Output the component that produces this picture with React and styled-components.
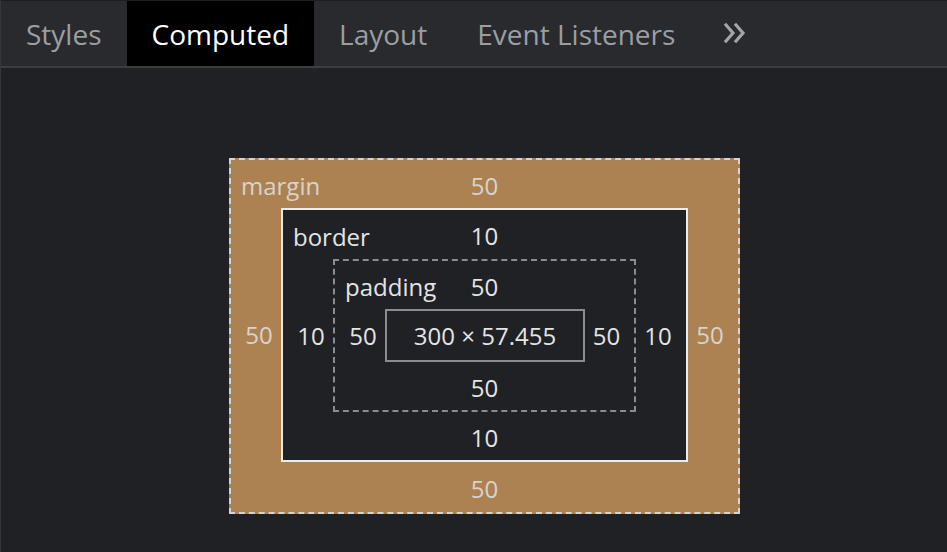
import React from "react";
import styled, { createGlobalStyle } from "styled-components";

const Global = createGlobalStyle`
  html, body { margin: 0; padding: 0; background: #202124; }
  body { font-family: "Open Sans", "Liberation Sans", sans-serif; }
  * { box-sizing: border-box; }
`;

const Root = styled.div`
  width: 947px;
  height: 552px;
  background: #202124;
  overflow: hidden;
  border-left: 1px solid #34353a;
`;

const TabBar = styled.div`
  display: flex;
  align-items: stretch;
  height: 68px;
  background: #292a2e;
  border-top: 1px solid #1c1d20;
  border-bottom: 2px solid #3c3d41;
`;

const Tab = styled.div`
  display: flex;
  align-items: center;
  padding: 1px 25px 0 25px;
  font-size: 28px;
  color: ${(p) => (p.$active ? "#ffffff" : "#9b9ea3")};
  background: ${(p) => (p.$active ? "#000000" : "transparent")};
  white-space: nowrap;
`;

const More = styled.div`
  display: flex;
  align-items: center;
  padding: 0 0 2px 23px;
  svg { display: block; }
`;

const Body = styled.div`
  display: flex;
  align-items: flex-start;
  padding: 90px 0 0 228px;
`;

const Layer = styled.div`
  display: grid;
  grid-template-columns: ${(p) => `${p.$l ?? 50}px auto ${p.$r ?? 50}px`};
  grid-template-rows: ${(p) => `${p.$t}px auto ${p.$b}px`};
  background: ${(p) => p.$bg};
  border: 2px ${(p) => p.$style} ${(p) => p.$color};
  font-size: 24px;
  color: ${(p) => p.$text};
`;

const TopRow = styled.div`
  grid-column: 1 / 4;
  display: grid;
  grid-template-columns: 1fr auto 1fr;
  align-items: center;
  padding-top: 3px;
`;

const Label = styled.span`
  justify-self: start;
  padding-left: 10px;
`;

const Value = styled.span`
  display: flex;
  align-items: center;
  justify-content: center;
  line-height: 1;
`;

const SideValue = styled(Value)`
  padding-left: ${(p) => (p.$side === "left" ? "6px" : "0")};
  padding-right: ${(p) => (p.$side === "right" ? "6px" : "0")};
`;

const BottomRow = styled(Value)`
  grid-column: 1 / 4;
  padding-top: 4px;
`;

const Content = styled.div`
  width: 200px;
  height: 53px;
  border: 2px solid #8b8c8f;
  display: flex;
  align-items: center;
  justify-content: center;
  font-size: 24px;
  color: #e3e4e6;
  white-space: nowrap;
`;

function Ring({ name, value, children, ...rest }) {
  return (
    <Layer {...rest}>
      <TopRow>
        <Label>{name}</Label>
        <Value>{value}</Value>
        <span />
      </TopRow>
      <SideValue $side="left">{value}</SideValue>
      {children}
      <SideValue $side="right">{value}</SideValue>
      <BottomRow>{value}</BottomRow>
    </Layer>
  );
}

export default function App() {
  return (
    <>
      <Global />
      <Root>
        <TabBar>
          <Tab>Styles</Tab>
          <Tab $active>Computed</Tab>
          <Tab>Layout</Tab>
          <Tab>Event Listeners</Tab>
          <More>
            <svg width="24" height="22" viewBox="0 0 24 22" fill="none" stroke="#a3a5a9" strokeWidth="3.2" strokeLinecap="square" strokeLinejoin="miter">
              <polyline points="3,3 10,11 3,19" />
              <polyline points="13,3 20,11 13,19" />
            </svg>
          </More>
        </TabBar>
        <Body>
          <Ring
            name="margin"
            value="50"
            $t={48}
            $b={50}
            $bg="#ad8253"
            $style="dashed"
            $color="#d4d4d4"
            $text="#d8d3cc"
          >
            <Ring
              name="border"
              value="10"
              $t={49}
              $b={48}
              $bg="#202124"
              $style="solid"
              $color="#ececec"
              $text="#e3e4e6"
            >
              <Ring
                name="padding"
                value="50"
                $t={48}
                $b={48}
                $r={49}
                $bg="#202124"
                $style="dashed"
                $color="#8b8c8f"
                $text="#e3e4e6"
              >
                <Content>300 × 57.455</Content>
              </Ring>
            </Ring>
          </Ring>
        </Body>
      </Root>
    </>
  );
}
